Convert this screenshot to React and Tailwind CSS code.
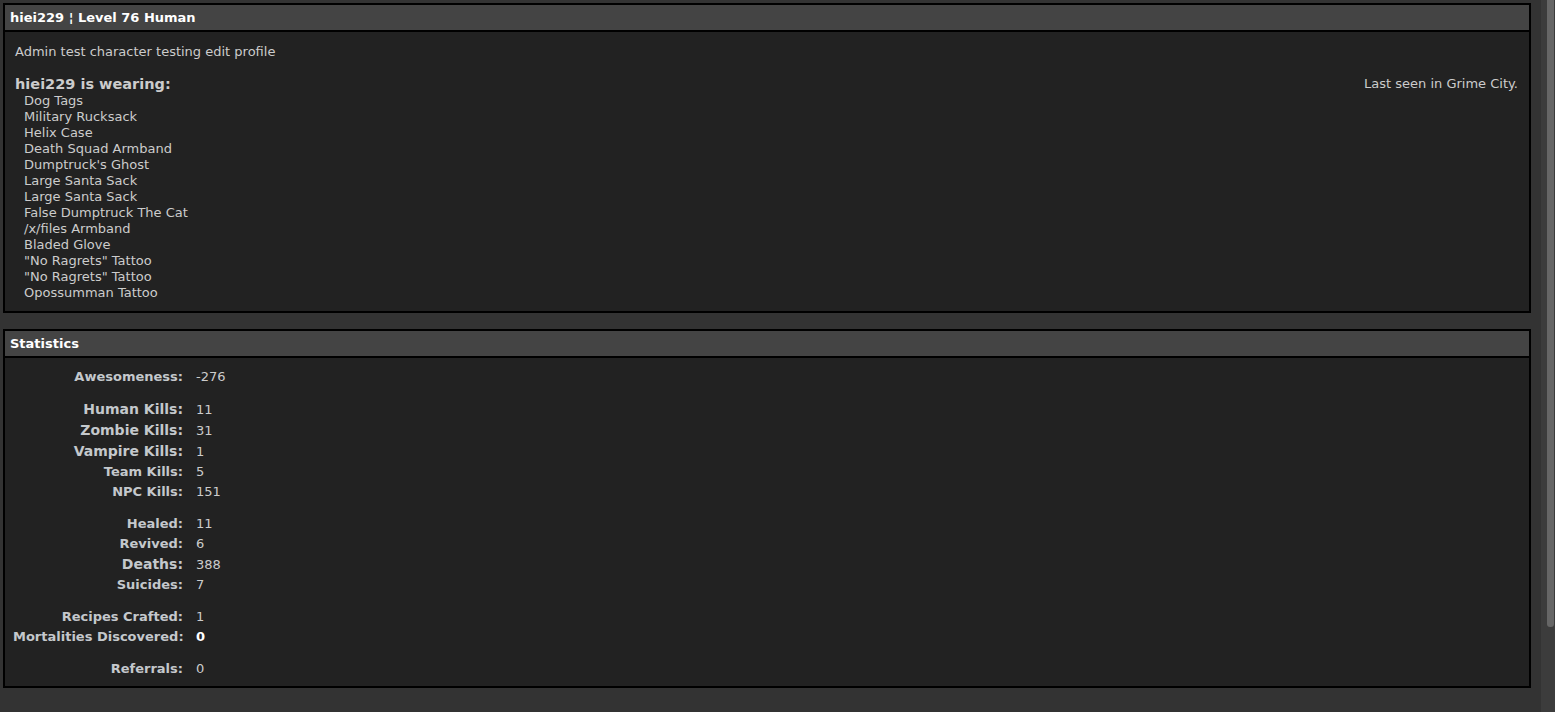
const items = [
  "Dog Tags",
  "Military Rucksack",
  "Helix Case",
  "Death Squad Armband",
  "Dumptruck's Ghost",
  "Large Santa Sack",
  "Large Santa Sack",
  "False Dumptruck The Cat",
  "/x/files Armband",
  "Bladed Glove",
  "\"No Ragrets\" Tattoo",
  "\"No Ragrets\" Tattoo",
  "Opossumman Tattoo",
];

const groups = [
  [{ l: "Awesomeness:", v: "-276" }],
  [
    { l: "Human Kills:", v: "11", big: true },
    { l: "Zombie Kills:", v: "31", big: true },
    { l: "Vampire Kills:", v: "1", big: true },
    { l: "Team Kills:", v: "5" },
    { l: "NPC Kills:", v: "151" },
  ],
  [
    { l: "Healed:", v: "11" },
    { l: "Revived:", v: "6" },
    { l: "Deaths:", v: "388", big: true },
    { l: "Suicides:", v: "7" },
  ],
  [
    { l: "Recipes Crafted:", v: "1" },
    { l: "Mortalities Discovered:", v: "0", strong: true },
  ],
  [{ l: "Referrals:", v: "0" }],
];

function Panel({ title, children, className = "" }) {
  return (
    <div className={"border-2 border-black bg-[#222222] " + className}>
      <div className="h-[27px] bg-[#444444] border-b-2 border-black pl-[5px] flex items-center text-[13px] font-bold text-white leading-none">
        {title}
      </div>
      {children}
    </div>
  );
}

export default function App() {
  return (
    <div
      className="flex h-[712px] w-full overflow-hidden bg-[#333333] text-[#cccccc]"
      style={{ fontFamily: "Verdana, 'DejaVu Sans', sans-serif" }}
    >
      <div className="flex-1 pl-[3px] pr-[10px] pt-[3px] flex flex-col gap-4">
        <Panel title="hiei229 ¦ Level 76 Human">
          <div className="pl-[10px] pr-[11px] pt-[12px] pb-[10px] text-[13px]">
            <div className="leading-[16px] h-[16px]">Admin test character testing edit profile</div>
            <div className="flex items-start justify-between mt-[15px]">
              <div>
                <div className="text-[14.5px] font-bold leading-[18px]">hiei229 is wearing:</div>
                <ul className="pl-[9px]">
                  {items.map((it, i) => (
                    <li key={i} className="leading-[16px] h-[16px]">
                      {it}
                    </li>
                  ))}
                </ul>
              </div>
              <div className="leading-[18px]">Last seen in Grime City.</div>
            </div>
          </div>
        </Panel>
        <Panel title="Statistics">
          <div className="pl-[8px] pt-[9px] pb-[7px] flex flex-col gap-[12px] text-[13px]">
            {groups.map((g, gi) => (
              <div key={gi} className="flex flex-col">
                {g.map((r, ri) => (
                  <div
                    key={ri}
                    className={
                      "grid grid-cols-[170px_auto] gap-x-[13px] items-center " +
                      (r.big ? "h-[21px]" : "h-[20px]")
                    }
                  >
                    <div
                      className={
                        "text-right font-bold whitespace-nowrap text-[#c4c8cc] " +
                        (r.big ? "text-[14px]" : "text-[13px]")
                      }
                    >
                      {r.l}
                    </div>
                    <div className={r.strong ? "font-bold text-white" : ""}>{r.v}</div>
                  </div>
                ))}
              </div>
            ))}
          </div>
        </Panel>
      </div>
      <div className="w-[14px] h-full bg-[#3c3c3c] flex">
        <div className="ml-[6px] w-[7px] h-[627px] bg-[#666666] rounded-b-[3px]" />
      </div>
    </div>
  );
}
